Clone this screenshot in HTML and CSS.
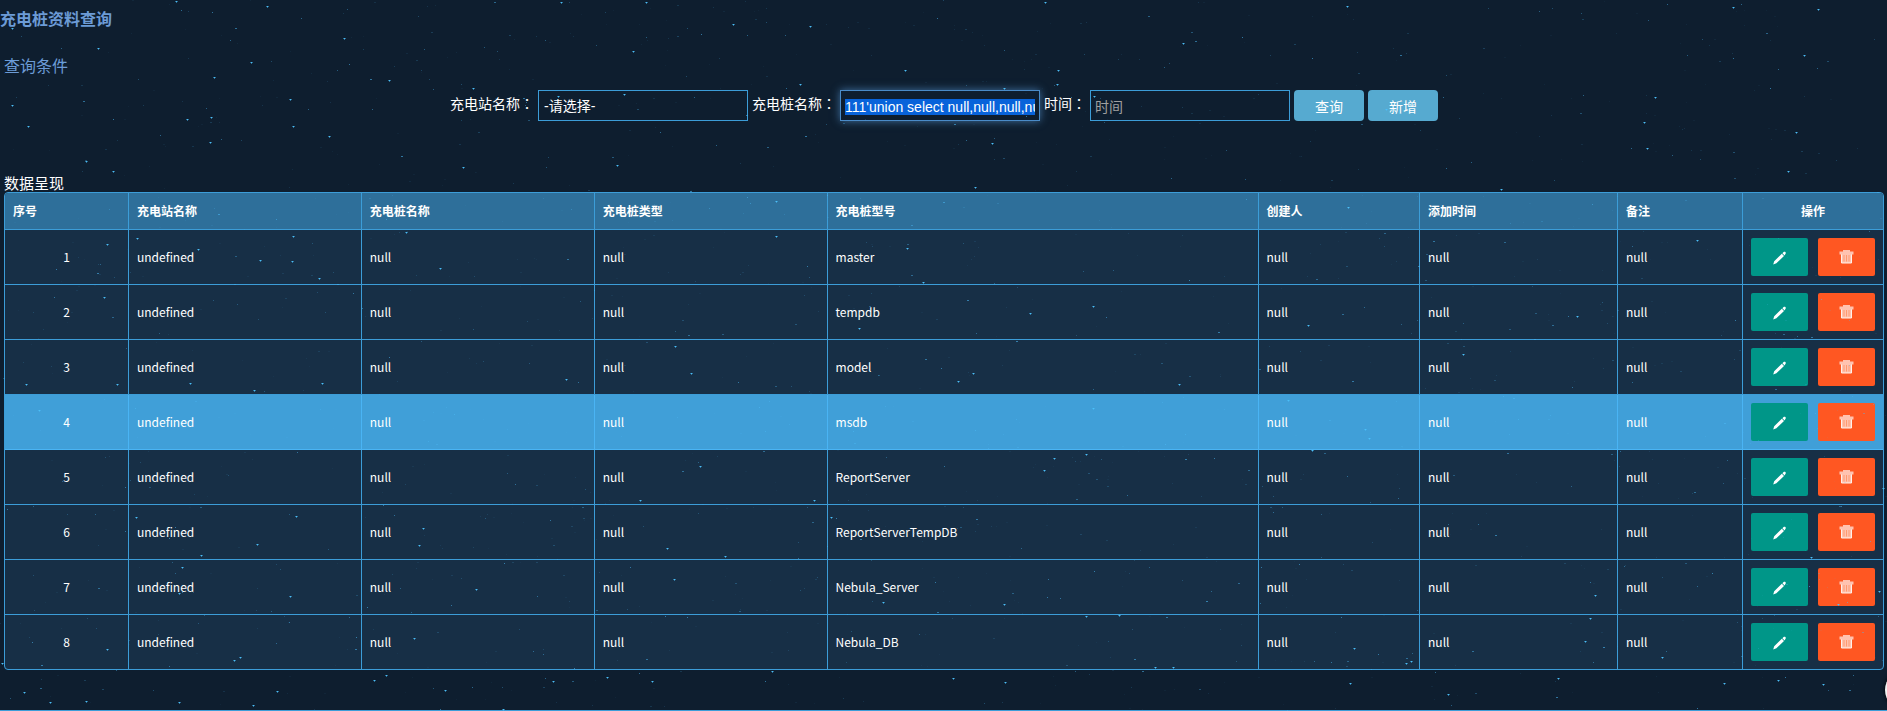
FILE: index.html
```html
<!DOCTYPE html>
<html lang="zh-CN">
<head>
<meta charset="utf-8">
<title>充电桩资料查询</title>
<link rel="stylesheet" href="styles.css">
</head>
<body>
<canvas class="stars" aria-hidden="true"></canvas>
<svg class="sprite" aria-hidden="true">
  <symbol id="icon-edit" viewBox="0 0 16 16">
    <path d="M1.200 15.500 L2.200 12.200 L9.800 4.800 L12 7 L4.400 14.300 Z M10.400 4.200 L11.600 3 C12.200 2.500 12.900 2.500 13.400 3 C13.900 3.600 13.900 4.300 13.400 4.900 L12.600 6.400 Z" fill="#fff"/>
  </symbol>
  <symbol id="icon-delete" viewBox="0 0 16 16">
    <path d="M4 1h7v1.500h3.500v3h-1.500v8.500h-11v-8.500h-1.500v-3h3.500z" fill="#ffc3b0"/>
    <path d="M2.500 5.500v8.500h10v-8.500" fill="none" stroke="#fff1ea" stroke-width="1"/>
    <path d="M5 6v6.500M7.500 6v6.500M10 6v6.500" fill="none" stroke="#ff9a70" stroke-width="1"/>
  </symbol>
</svg>
<main class="page">
  <h1 class="page-title">充电桩资料查询</h1>
  <section class="section">
    <h2 class="section-title">查询条件</h2>
    <form class="filters">
      <label class="label" for="station">充电站名称<span class="colon" lang="ja">：</span></label>
      <select class="field field-select" id="station"><option>-请选择-</option></select>
      <label class="label" for="pile">充电桩名称<span class="colon" lang="ja">：</span></label>
      <input class="field" id="pile" type="text" value="111'union select null,null,null,null">
      <label class="label" for="time">时间<span class="colon" lang="ja">：</span></label>
      <input class="field" id="time" type="text" placeholder="时间">
      <button class="btn" type="button">查询</button>
      <button class="btn" type="button">新增</button>
    </form>
  </section>
  <section class="section">
    <h2 class="data-title">数据呈现</h2>
    <table class="grid">
      <colgroup>
        <col class="c-index"><col class="c-name"><col class="c-name"><col class="c-name"><col class="c-model"><col class="c-creator"><col class="c-time"><col class="c-note"><col class="c-action">
      </colgroup>
      <thead>
        <tr><th>序号</th><th>充电站名称</th><th>充电桩名称</th><th>充电桩类型</th><th>充电桩型号</th><th>创建人</th><th>添加时间</th><th>备注</th><th class="center">操作</th></tr>
      </thead>
      <tbody id="rows"></tbody>
    </table>
  </section>
</main>
<button class="float-btn" type="button" aria-label="菜单"></button>
<script src="app.js"></script>
</body>
</html>
```
FILE: styles.css
```css
* { box-sizing: border-box; }

html, body { height: 100%; }

body {
  margin: 0;
  overflow: hidden;
  background: #0e1e2f;
  color: #fff;
  font: 14px/20px "Noto Sans CJK SC", sans-serif;
}

.stars {
  position: fixed;
  inset: 0;
  pointer-events: none;
  z-index: 2;
}

.sprite { display: none; }

.page {
  min-height: 100%;
  border-bottom: 1px solid #3c9dd8;
}

.page-title,
.section-title {
  margin: 0;
  color: #6c9bd6;
  font-size: 16px;
  line-height: 24px;
}

.page-title {
  padding: 6px 0 23px;
  font-weight: 700;
}

.section { padding: 0 3px 0 4px; }

.section-title { font-weight: 400; }

.filters {
  display: flex;
  justify-content: center;
  gap: 4px;
  padding: 13px 0 53px;
}

.label { line-height: 26px; }

.colon { font-family: "Noto Sans CJK JP", sans-serif; }

.field {
  width: 200px;
  height: 31px;
  padding: 2px 4px 0;
  border: 1px solid #3c9dd8;
  border-radius: 0;
  outline: 0;
  background: transparent;
  color: #fff;
  font: 14px "Liberation Sans", "Noto Sans CJK SC", sans-serif;
}

.field-select {
  width: 210px;
  padding: 0 5px;
  appearance: none;
}

.field::placeholder { color: #a0a0a0; }

.field::selection {
  background: #0863da;
  color: #fff;
}

.field:focus {
  border-color: #4a8bc8;
  box-shadow: 0 0 8px #3f6f9f;
}

.btn {
  width: 70px;
  height: 31px;
  padding: 0;
  border: 0;
  border-radius: 4px;
  background: #56aad0;
  color: #fff;
  font: 14px "Liberation Sans", "Noto Sans CJK SC", sans-serif;
}

.data-title {
  margin: 0;
  font-size: 15px;
  font-weight: 400;
  line-height: 18px;
}

.grid {
  width: 100%;
  table-layout: fixed;
  border: 1px solid #3c9dd8;
  border-radius: 4px;
  border-spacing: 0;
  background: #172f46;
  font-size: 12px;
  line-height: 20px;
  overflow: hidden;
}

.c-index { width: 6.6%; }
.c-name { width: 12.4%; }
.c-model { width: 22.95%; }
.c-creator { width: 8.6%; }
.c-time { width: 10.54%; }
.c-note { width: 6.66%; }
.c-action { width: 7.45%; }

.grid th,
.grid td {
  padding: 8px;
  border-right: 1px solid #3c9dd8;
  border-bottom: 1px solid #3c9dd8;
  text-align: left;
}

.grid th {
  height: 37px;
  background: #2e6f9a;
}

.grid .center { text-align: center; }

.grid th:last-child,
.grid td:last-child { border-right: 0; }

.grid tr:last-child td { border-bottom: 0; }

.grid .active td {
  background: #409fd8;
  border-color: #4ab4f4;
}

.actions {
  display: flex;
  gap: 10px;
}

.action {
  display: flex;
  flex: 1;
  align-items: center;
  justify-content: center;
  height: 38px;
  padding: 0;
  border: 0;
  border-radius: 2px;
}

.action svg {
  width: 16px;
  height: 16px;
}

.edit { background: #009688; }
.delete { background: #ff5722; }

.float-btn {
  position: fixed;
  right: -38px;
  bottom: 1px;
  width: 40px;
  height: 40px;
  padding: 0;
  border: 0;
  border-radius: 50%;
  background: #f2f2f2;
  box-shadow: 0 0 4px #000;
}
```
FILE: app.js
```js
const models = ['master', 'tempdb', 'model', 'msdb', 'ReportServer', 'ReportServerTempDB', 'Nebula_Server', 'Nebula_DB'];
const activeRow = 3;

document.getElementById('rows').innerHTML = models.map((model, i) => `
  <tr class="${i === activeRow ? 'active' : ''}">
    <td class="center">${i + 1}</td><td>undefined</td><td>null</td><td>null</td><td>${model}</td><td>null</td><td>null</td><td>null</td>
    <td><div class="actions">
      <button class="action edit" type="button" aria-label="编辑"><svg><use href="#icon-edit"/></svg></button>
      <button class="action delete" type="button" aria-label="删除"><svg><use href="#icon-delete"/></svg></button>
    </div></td>
  </tr>`).join('');

// Brightest stars as [x, y]; the faint ones are scattered by a seeded generator.
const bright = [
  [214, 77], [176, 1], [267, 6], [344, 38], [12, 28], [98, 48], [251, 62], [389, 80], [473, 88], [290, 99], [12, 105],
  [293, 126], [329, 136], [187, 119], [28, 126], [86, 161], [113, 171], [463, 167], [211, 117], [210, 142],
  [137, 238], [198, 249], [293, 236], [292, 261], [260, 260], [440, 268], [406, 232], [104, 297], [319, 278], [107, 244],
  [561, 2], [646, 2], [633, 51], [810, 26], [733, 24], [558, 96], [624, 94], [1057, 84], [1045, 2], [800, 84], [905, 70],
  [1004, 88], [1094, 96], [617, 165], [776, 201], [776, 236], [907, 248], [975, 187], [923, 282], [859, 328], [675, 346],
  [1030, 313], [1093, 408], [1093, 306], [992, 143], [1058, 70],
  [1386, 109], [1183, 43], [1347, 6], [1733, 7], [1818, 9], [1804, 55], [1644, 122], [1647, 148], [1796, 132], [1788, 171],
  [1655, 97], [1501, 189], [1348, 207], [1463, 354], [1369, 438], [1365, 429], [1577, 316], [1697, 240], [1308, 325], [1312, 450],
  [117, 384], [26, 384], [190, 383], [254, 390], [322, 383], [39, 410], [136, 517], [296, 516], [257, 544], [201, 555],
  [423, 528], [419, 545], [182, 567], [179, 593], [290, 596], [240, 657], [234, 660], [414, 638], [476, 589], [2, 663],
  [277, 691], [386, 675], [374, 680], [445, 690], [86, 701], [50, 702], [179, 702], [253, 705], [24, 692], [107, 649],
  [566, 379], [691, 373], [640, 500], [700, 466], [814, 500], [1044, 470], [831, 517], [725, 556], [667, 548], [883, 602],
  [1004, 604], [674, 579], [1173, 667], [1155, 667], [1119, 615], [1086, 616], [607, 677], [503, 709], [553, 681], [652, 681],
  [953, 678], [1005, 682], [772, 671], [1054, 458], [1086, 454], [958, 381], [973, 373], [1179, 384],
  [1288, 400], [1883, 488], [1811, 557], [1595, 595], [1590, 618], [1350, 683], [1354, 648], [1585, 641], [1448, 694],
  [1558, 678], [1778, 680], [1823, 684], [1879, 591], [1724, 683], [1411, 661], [1406, 663], [1662, 657], [1838, 604]
];

const canvas = document.querySelector('.stars');
canvas.width = window.innerWidth;
canvas.height = window.innerHeight;
const ctx = canvas.getContext('2d');
let seed = 12345;
const random = () => (seed = (seed * 16807) % 2147483647) / 2147483647;
for (let i = 0; i < 1600; i++) {
  const x = Math.floor(random() * canvas.width);
  const y = Math.floor(random() * canvas.height);
  ctx.fillStyle = `rgba(75, 185, 245, ${0.05 + 0.55 * random() ** 3})`;
  ctx.fillRect(x, y, random() > 0.7 ? 2 : 1, 1);
}
for (const [x, y] of bright) {
  ctx.fillStyle = 'rgba(75, 185, 245, 0.5)';
  ctx.fillRect(x - 1, y, 3, 1);
  ctx.fillRect(x, y + 1, 1, 1);
  ctx.fillStyle = 'rgba(75, 195, 250, 0.95)';
  ctx.fillRect(x, y, 1, 1);
}

const pile = document.getElementById('pile');
pile.focus();
pile.select();
```
